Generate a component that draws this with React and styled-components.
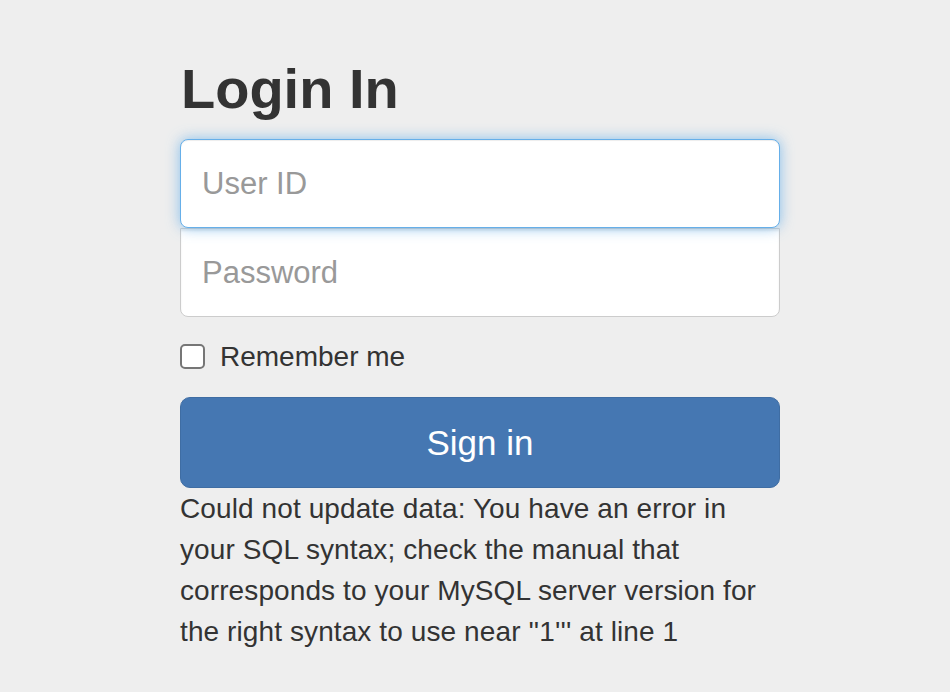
import React from "react";
import styled, { createGlobalStyle } from "styled-components";

const Global = createGlobalStyle`
  html, body { margin: 0; padding: 0; background: #eeeeee; }
  body {
    font-family: "Liberation Sans", Arial, Helvetica, sans-serif;
    color: #333333;
    font-size: 28px;
    line-height: 41px;
  }
`;

const Page = styled.div`
  padding: 58px 0 40px 180px;
`;

const Form = styled.form`
  width: 600px;
  display: flex;
  flex-direction: column;
`;

const Heading = styled.h2`
  margin: 0 0 19px 0;
  padding-left: 1px;
  font-size: 56px;
  line-height: 62px;
  font-weight: bold;
  color: #333333;
`;

const Input = styled.input`
  box-sizing: border-box;
  width: 600px;
  height: 89px;
  margin: 0;
  padding: 0 21px;
  font-family: "Liberation Sans", Arial, Helvetica, sans-serif;
  font-size: 31px;
  color: #555555;
  caret-color: #333333;
  background: #ffffff;
  border: ${(p) => (p.$focused ? "1.5px solid #66afe9" : "1px solid #cccccc")};
  border-radius: ${(p) => (p.$first ? "8px" : "0 0 8px 8px")};
  box-shadow: ${(p) =>
    p.$focused
      ? "inset 0 1px 1px rgba(0,0,0,.075), 0 0 14px rgba(102,175,233,.75)"
      : "inset 0 2px 2px rgba(0,0,0,.075)"};
  position: relative;
  z-index: ${(p) => (p.$focused ? 2 : 1)};
  margin-bottom: ${(p) => (p.$first ? "0" : "19px")};
  outline: none;
  &::placeholder { color: #999999; }
`;

const CheckRow = styled.label`
  display: flex;
  align-items: center;
  gap: 15px;
  height: 40px;
  margin: 0 0 21px 0;
  font-size: 28px;
  color: #333333;
`;

const Box = styled.input`
  appearance: none;
  -webkit-appearance: none;
  box-sizing: border-box;
  width: 25px;
  height: 25px;
  margin: 0;
  border: 2px solid #767676;
  border-radius: 5px;
  background: #ffffff;
`;

const Button = styled.button`
  box-sizing: border-box;
  width: 600px;
  height: 91px;
  background: #4577b2;
  border: 1px solid #3f6da3;
  border-radius: 10px;
  color: #ffffff;
  font-family: "Liberation Sans", Arial, Helvetica, sans-serif;
  font-size: 35px;
  cursor: pointer;
`;

const Message = styled.p`
  margin: 0;
  font-size: 28px;
  line-height: 41px;
  letter-spacing: 0.1px;
  color: #333333;
`;

export default function App() {
  return (
    <>
      <Global />
      <Page>
        <Form onSubmit={(e) => e.preventDefault()}>
          <Heading>Login In</Heading>
          <Input $first $focused placeholder="User ID" autoFocus />
          <Input type="password" placeholder="Password" />
          <CheckRow>
            <Box type="checkbox" />
            Remember me
          </CheckRow>
          <Button type="submit">Sign in</Button>
          <Message>
            Could not update data: You have an error in your SQL syntax; check the manual that
            corresponds to your MySQL server version for the right syntax to use near ''1''' at
            line 1
          </Message>
        </Form>
      </Page>
    </>
  );
}
